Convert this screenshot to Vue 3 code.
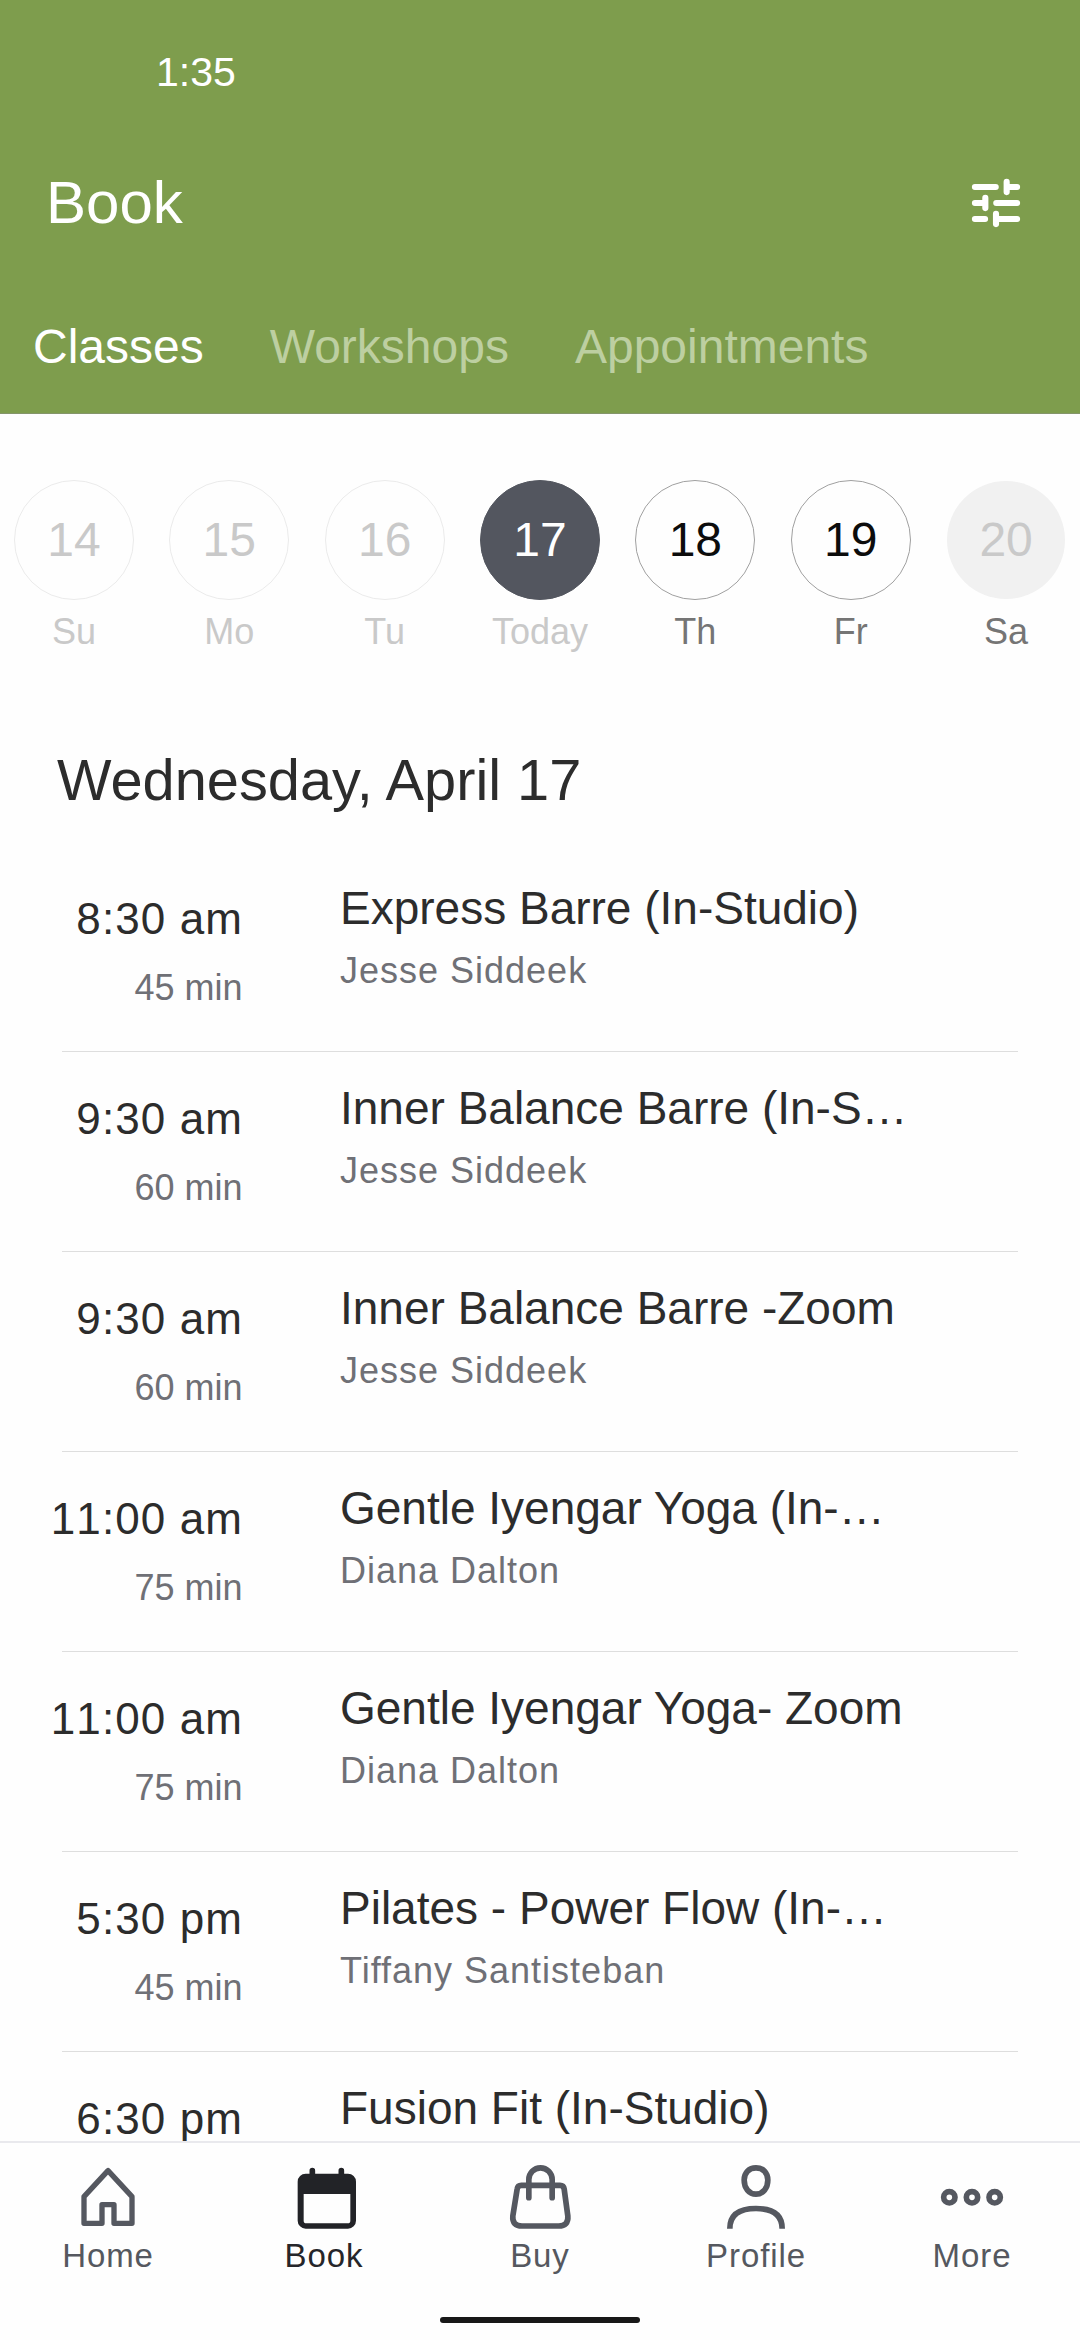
<script setup>
const tabs = ['Classes', 'Workshops', 'Appointments']

const days = [
  { num: 14, label: 'Su', state: 'past' },
  { num: 15, label: 'Mo', state: 'past' },
  { num: 16, label: 'Tu', state: 'past' },
  { num: 17, label: 'Today', state: 'selected' },
  { num: 18, label: 'Th', state: 'open' },
  { num: 19, label: 'Fr', state: 'open' },
  { num: 20, label: 'Sa', state: 'empty' },
]

const classes = [
  { time: '8:30 am', length: '45 min', title: 'Express Barre (In-Studio)', teacher: 'Jesse Siddeek' },
  { time: '9:30 am', length: '60 min', title: 'Inner Balance Barre (In-S…', teacher: 'Jesse Siddeek' },
  { time: '9:30 am', length: '60 min', title: 'Inner Balance Barre -Zoom', teacher: 'Jesse Siddeek' },
  { time: '11:00 am', length: '75 min', title: 'Gentle Iyengar Yoga (In-…', teacher: 'Diana Dalton' },
  { time: '11:00 am', length: '75 min', title: 'Gentle Iyengar Yoga- Zoom', teacher: 'Diana Dalton' },
  { time: '5:30 pm', length: '45 min', title: 'Pilates - Power Flow (In-…', teacher: 'Tiffany Santisteban' },
  { time: '6:30 pm', length: '', title: 'Fusion Fit (In-Studio)', teacher: '' },
]
</script>

<template>
  <div class="screen">
    <header class="header">
      <div class="status">1:35</div>
      <div class="title-bar">
        <h1>Book</h1>
        <svg class="filter" viewBox="0 0 24 24">
          <path d="M4.100 6H11.900M16 4.100V7.900M16 6H19.900M4.100 12H8M8 10.100V13.900M12.100 12H19.900M4.100 18H7.900M12 16.100V19.900M12 18H19.900" />
        </svg>
      </div>
      <nav class="tabs">
        <span v-for="(tab, i) in tabs" :key="tab" class="tab" :class="{ active: i === 0 }">{{ tab }}</span>
      </nav>
    </header>

    <main class="content">
      <div class="days">
        <div v-for="day in days" :key="day.num" class="day" :class="day.state">
          <div class="circle">{{ day.num }}</div>
          <div class="weekday">{{ day.label }}</div>
        </div>
      </div>
      <h2>Wednesday, April 17</h2>
      <div v-for="(item, i) in classes" :key="i" class="item">
        <div class="row">
          <div class="when">
            <div class="time">{{ item.time }}</div>
            <div class="length">{{ item.length }}</div>
          </div>
          <div class="what">
            <div class="name">{{ item.title }}</div>
            <div class="teacher">{{ item.teacher }}</div>
          </div>
        </div>
        <div class="divider"></div>
      </div>
    </main>

    <footer class="footer">
      <div class="nav">
        <div class="nav-item">
          <svg viewBox="0 0 240 216">
            <path d="M120 32L48 110V190H102V134H138V190H192V110Z" stroke-width="16" />
          </svg>
          <span>Home</span>
        </div>
        <div class="nav-item current">
          <svg viewBox="0 0 240 216">
            <path class="solid" fill-rule="evenodd" d="M65 41H192A24 24 0 0 1 216 65V182A24 24 0 0 1 192 206H65A24 24 0 0 1 41 182V65A24 24 0 0 1 65 41ZM59 102V182A8 8 0 0 0 67 190H191A8 8 0 0 0 199 182V102Z" />
            <path d="M85 32V50M172 32V50" />
          </svg>
          <span>Book</span>
        </div>
        <div class="nav-item">
          <svg viewBox="0 0 240 216">
            <path d="M64 76H180Q191 76 192.500 87L203.500 168Q206 198 176 198H66Q36 198 38.500 168L51.500 87Q53 76 64 76Z" />
            <path d="M86.500 113V58.500A35 35 0 0 1 156.500 58.500V113" />
          </svg>
          <span>Buy</span>
        </div>
        <div class="nav-item">
          <svg viewBox="0 0 240 216">
            <path d="M120 23.500C141 23.500 155.500 38 155.500 60C155.500 84 141 102.500 120 102.500S84.500 84 84.500 60C84.500 38 99 23.500 120 23.500Z" />
            <path class="flat" d="M41.500 206C41.500 163 72 145.500 120 145.500S198.500 163 198.500 206" />
          </svg>
          <span>Profile</span>
        </div>
        <div class="nav-item">
          <svg viewBox="0 0 240 216">
            <circle cx="52" cy="112" r="17" />
            <circle cx="120" cy="112" r="17" />
            <circle cx="188" cy="112" r="17" />
          </svg>
          <span>More</span>
        </div>
      </div>
      <div class="gesture"></div>
    </footer>
  </div>
</template>

<style>
body {
  margin: 0;
}
</style>

<style scoped>
.screen {
  display: flex;
  flex-direction: column;
  width: 1080px;
  height: 2340px;
  overflow: hidden;
  background: #fefefe;
  color: #2c2c2c;
  font-family: "Liberation Sans", Arial, sans-serif;
  white-space: nowrap;
}
.header {
  flex: none;
  background: #7e9d4d;
  border-bottom: 1px solid #84956a;
  color: #fff;
}
.status {
  height: 143px;
  padding-left: 156px;
  font-size: 41px;
  line-height: 144px;
}
.title-bar {
  display: flex;
  align-items: center;
  justify-content: space-between;
  height: 120px;
  padding: 0 52px 0 46px;
}
h1 {
  margin: 0;
  font-size: 60px;
  font-weight: 400;
  line-height: 118px;
}
.filter {
  width: 64px;
  height: 64px;
  fill: none;
  stroke: #fff;
  stroke-width: 2.3;
  stroke-linecap: round;
}
.tabs {
  display: flex;
  margin-top: 18px;
}
.tab {
  padding: 0 33px;
  font-size: 48px;
  line-height: 132px;
  color: #bdcfa1;
}
.tab.active {
  color: #fff;
}
.content {
  flex: 1;
  min-height: 0;
  overflow: hidden;
}
.days {
  display: flex;
  justify-content: center;
  padding-top: 66px;
}
.day {
  display: flex;
  flex: none;
  flex-direction: column;
  align-items: center;
  width: 155.36px;
}
.circle {
  box-sizing: border-box;
  width: 120px;
  height: 120px;
  border: 1px solid #ebebeb;
  border-radius: 50%;
  font-size: 48px;
  line-height: 118px;
  text-align: center;
  color: #c9c9c9;
}
.weekday {
  margin-top: 8px;
  font-size: 36px;
  line-height: 48px;
  color: #c9c9c9;
}
.selected .circle {
  border-color: #53565f;
  background: #53565f;
  color: #fff;
}
.open .circle {
  border-color: #a0a0a0;
  color: #0c0c0c;
}
.empty .circle {
  border-color: transparent;
  background: #f1f1f1;
  background-clip: padding-box;
}
.open .weekday,
.empty .weekday {
  color: #757575;
}
h2 {
  margin: 84px 0 32px;
  padding-left: 57px;
  font-size: 57.75px;
  font-weight: 400;
  line-height: 80px;
}
.row {
  display: flex;
  height: 199px;
}
.when {
  width: 243px;
  padding-top: 37px;
  text-align: right;
}
.time {
  font-size: 44px;
  line-height: 60px;
  letter-spacing: 1.1px;
  font-kerning: none;
}
.length {
  margin-top: 14px;
  padding-right: 0.5px;
  font-size: 36px;
  line-height: 50px;
  color: #6f7076;
}
.what {
  margin-left: 97px;
  padding-top: 26px;
}
.name {
  font-size: 46px;
  line-height: 60px;
}
.teacher {
  margin-top: 8px;
  font-size: 36px;
  line-height: 50px;
  letter-spacing: 1px;
  color: #6f7076;
}
.divider {
  height: 1px;
  margin: 0 62px;
  background: #dedede;
}
.footer {
  display: flex;
  flex: none;
  flex-direction: column;
  align-items: center;
  box-sizing: border-box;
  height: 199px;
  border-top: 2px solid #e9e9ed;
}
.nav {
  display: flex;
  width: 100%;
  height: 174px;
}
.nav-item {
  display: flex;
  flex: 1;
  flex-direction: column;
  align-items: center;
  padding-top: 17px;
  font-size: 33px;
  line-height: 40px;
  letter-spacing: 0.9px;
  color: #55585f;
}
.nav-item svg {
  width: 80px;
  height: 72px;
  margin-bottom: 4px;
  fill: none;
  stroke: #555860;
  stroke-width: 17;
  stroke-linecap: round;
  stroke-linejoin: round;
}
.nav-item .flat {
  stroke-linecap: butt;
}
.nav-item.current {
  color: #26262a;
}
.nav-item.current svg {
  stroke: #222327;
}
.nav-item .solid {
  fill: #222327;
  stroke: none;
}
.gesture {
  width: 200px;
  height: 6px;
  border-radius: 3px;
  background: #181818;
}
</style>
